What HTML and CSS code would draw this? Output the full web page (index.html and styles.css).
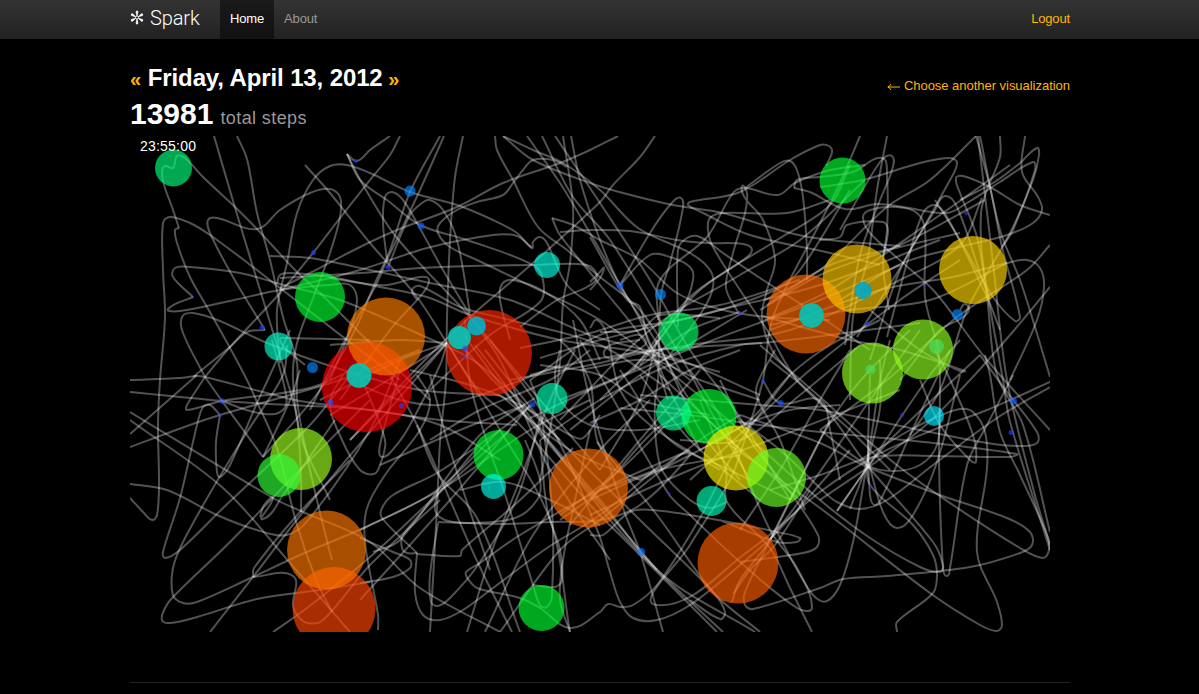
FILE: index.html
```html
<!DOCTYPE html>
<html lang="en">
<head>
<meta charset="utf-8">
<title>Spark</title>
<link rel="stylesheet" href="styles.css">
</head>
<body>
<header class="navbar">
  <div class="navbar-inner">
    <a class="brand"><svg class="brand-mark" viewBox="0 0 14 14"><path d="M7 5.4L6 1.2Q7 -.6 8 1.2ZM7 8.6L6 12.8Q7 14.6 8 12.8Z"/><path transform="rotate(60 7 7)" d="M7 5.4L6 1.2Q7 -.6 8 1.2ZM7 8.6L6 12.8Q7 14.6 8 12.8Z"/><path transform="rotate(120 7 7)" d="M7 5.4L6 1.2Q7 -.6 8 1.2ZM7 8.6L6 12.8Q7 14.6 8 12.8Z"/><circle class="hub" cx="7" cy="7" r="1.5"/></svg><span class="brand-name">Spark</span></a>
    <nav class="nav"><a class="nav-item active">Home</a><a class="nav-item">About</a></nav>
    <a class="logout">Logout</a>
  </div>
</header>
<main class="container">
  <div class="heading">
    <div>
      <h2 class="date"><a>«</a> <span class="date-text">Friday, April 13, 2012</span> <a>»</a></h2>
      <p class="total"><strong>13981</strong><small>total steps</small></p>
    </div>
    <a class="choose"><svg class="arrow" viewBox="0 0 13 8"><path d="M13 4H1M4 1Q3 3.2 .8 4Q3 4.8 4 7"/></svg><span>Choose another visualization</span></a>
  </div>
  <svg class="viz" viewBox="130 136 920 496">
    <g id="trails"></g>
    <g id="dots"></g>
    <text class="clock" x="140" y="151" textLength="56">23:55:00</text>
  </svg>
  <hr class="rule">
</main>
<script src="viz.js"></script>
</body>
</html>
```
FILE: styles.css
```css
body { margin: 0; background: #000; color: #fff; font: 13px/18px "Liberation Sans", Arial, sans-serif; overflow: hidden; }
.navbar { height: 39px; background: linear-gradient(#333, #222); }
.navbar-inner { width: 940px; height: 39px; margin-left: 130px; display: flex; }
.brand { width: 90px; display: flex; align-items: flex-start; }
.brand-mark { width: 14px; height: 15px; margin-top: 10px; fill: #fff; stroke: #fff; stroke-width: .7; overflow: visible; }
.brand-mark .hub { fill: none; stroke-width: .8; }
.brand-name { margin: 7px 0 0 6px; font: 300 20px/22px Roboto, "Open Sans", sans-serif; letter-spacing: -.1px; }
.nav { display: flex; flex: 1; }
.nav-item { padding: 10px 10px 11px; color: #999; line-height: 18px; letter-spacing: -.15px; }
.nav-item.active { color: #fff; background: linear-gradient(#1a1a1a, #111); }
.logout { color: #ffb400; padding-top: 10px; letter-spacing: -.15px; }
.container { width: 940px; margin-left: 130px; }
.heading { height: 97px; display: flex; justify-content: space-between; }
.date { margin: 21px 0 0; font-size: 24px; line-height: 36px; white-space: nowrap; }
.date a { color: #ffb400; font-size: 20px; }
.date-text { letter-spacing: -.12px; margin-right: -1px; }
.total { margin: -1px 0 0; line-height: 36px; display: flex; align-items: baseline; gap: 7px; }
.total strong { font-size: 30px; }
.total small { font-size: 18px; color: #999; letter-spacing: .4px; }
.choose { color: #ffb400; padding-top: 38px; display: flex; gap: 4px; letter-spacing: -.03px; }
.arrow { width: 13px; height: 8px; margin-top: 6px; fill: none; stroke: #ffb400; stroke-width: 1; }
.viz { display: block; width: 920px; height: 496px; margin-top: 1px; overflow: hidden; }
.heading + .viz { margin-top: 0; }
#trails { fill: none; stroke: #fff; stroke-width: 2; stroke-opacity: .32; }
#dots { fill-opacity: .66; }
.clock { fill: #fff; font-size: 14px; }
.rule { margin: 50px 0 0; border: 0; border-top: 1px solid #222; }
```
FILE: viz.js
```js
// Each line is a smooth trail through x,y points.
const trails = `
214,136 236,211 253,267 276,342 287,380 297,418 301,480 301,512
237,136 247,159 257,213 270,260 283,317 297,363 297,400 310,470 328,545 332,560
179,228 172,207 164,185 162,172 165,166 173,168 177,156 185,158 203,177 235,207 257,229 297,272 320,293 370,343 430,400
179,228 175,230 177,243 190,277 207,307 230,348 247,380 257,402 277,448 297,525 317,582 332,612
400,380 347,340 280,288 253,267 210,235 190,223 170,217 163,223 163,270 165,317 160,380 158,425 159,485 157,515 152,520 143,512 130,498
265,330 233,277 210,233 208,220 217,218 257,229 280,210 310,193 330,189 340,197 340,217 330,253 315,293 297,343 293,380 302,440 330,500
193,297 173,277 175,268 190,267 240,273 280,284 340,300 410,330 480,365 560,440
193,297 168,309 180,311 230,301 280,290 330,285 350,285 357,300 350,330 330,380
205,377 183,333 182,317 193,313 220,321 267,343 343,370 420,390 500,395
193,377 230,347 247,332 265,330
205,377 230,347 280,293 313,253 340,218 370,180 390,155 400,136
305,165 330,193 370,243 417,297 447,343 480,392 517,422 547,455 593,508 630,545 717,632
280,363 277,310 287,263 297,213 313,180 330,166 347,165 370,173 410,192 457,205 493,220 517,233 532,248 533,242 540,237 547,243 567,285 600,310
347,154 357,161 370,150 390,136
347,154 363,185 397,238 470,317 540,400 600,470
270,256 310,258 370,270 430,283 510,300 590,335 680,360 760,395
277,284 280,275 290,273 330,277 370,285 427,297 470,315 560,340 640,352 720,372
440,136 410,192 390,250 375,283 355,330 320,390 263,457
444,136 420,190 387,260 375,287 345,340 310,410
463,136 455,177 450,240 447,317 446,380 440,442 437,508 430,632
495,136 497,150 513,180 538,227 567,250 600,277 640,310 680,370
503,136 533,150 563,163 600,190 638,228 690,253 710,270 713,287 703,310 670,355
618,136 590,150 560,163 503,183 457,207 397,230 360,247 310,273 280,288
567,167 553,160 533,160 523,170 513,183 503,195 477,202 457,210 440,223 438,233 450,247 477,260 533,287 600,320 680,380 740,430
280,290 360,270 427,248 493,235 517,236 532,248
280,278 360,273 420,268 470,266 533,265 587,265 597,277 587,287 557,300 520,327
387,260 383,223 385,197 392,192 403,200 417,223 443,270 470,315
388,267 410,215 422,203 430,200 443,210 457,240 470,313
347,154 360,180 387,200 420,225 467,240 533,265 543,280 540,302 490,335 430,390
330,278 360,283 387,285 420,277 429,280 423,293 390,330 340,400
417,300 412,290 420,286 460,307 510,320 600,345 670,390
527,136 560,183 590,233 620,285 640,320 665,380 700,450
542,136 573,197 610,240 680,355 710,410 750,480
555,136 600,203 650,280 690,350 735,410 790,500
563,136 573,207 570,263 563,303 560,363 550,430 540,480
571,136 580,180 600,240 620,285 655,340 690,400 740,450
655,136 640,157 613,185 600,202 533,263 470,317 420,365 350,440
552,218 573,225 600,240 640,260 677,293 723,310 767,317 830,320
552,218 560,235 600,285 650,350 668,400
510,340 500,300 502,284 513,280 545,292 580,320 600,360
503,136 533,160 590,183 623,193 673,205 723,213 790,233 830,240 900,246
620,285 650,233 670,205 681,198 682,213 670,263 661,295 658,380 655,402 656,442 663,472 690,500 710,508 727,502
560,232 590,230 630,231 677,240 707,243 743,244 752,250 743,260 690,297 633,370
678,327 678,250 687,238 700,237 723,253 763,280 810,310 870,350
620,285 650,255 670,257 690,267 693,280 683,307 640,365
830,200 787,213 723,213 710,218 708,230 713,247 740,290 767,330 797,380 850,430 890,470
826,166 832,152 829,146 820,145 790,160 740,192 690,202 688,205 703,213 750,235 830,253 880,265
865,165 830,170 795,183 778,195 745,188 733,193 707,237 660,280 658,320
738,312 726,288 733,253 745,213 747,193 742,186 745,198 763,220 775,260 767,290 762,317 772,350 797,380
807,280 807,250 803,197 797,170 790,161 780,163 745,188
850,165 830,205 777,240 700,290 650,350 600,400
850,190 800,270 775,290 720,310 680,320 600,335 530,380
865,180 800,240 740,275 650,330 560,420
794,188 797,180 820,177 853,172 882,158 887,177 887,230 883,257
794,188 810,192 845,209 877,204 903,207 947,213 967,203 1000,182 1033,162 1035,170 1013,230 1002,247
820,187 863,180 920,163 950,158 957,163 950,180 903,263 857,337
860,136 840,183 820,223 773,317 763,380 748,430
887,136 877,190 868,257 853,317 850,400
976,136 930,180 887,207 820,270 765,300
978,136 993,263 1007,380 1033,488 1050,545
976,136 990,187 1002,247 1020,317 1015,321 993,297 960,240 935,200
1000,136 1000,157 987,190 981,213 983,263 1003,380 1010,422 1050,550
1025,136 1022,172 1038,197 1042,210 1033,223 1007,235 960,247 903,263 840,300
960,200 993,183 1020,163 1037,148 1039,155 1033,180 1010,233 967,310 940,390 910,435
1050,215 1020,205 990,187 963,176 956,178 960,193 977,237 987,297 997,375 1023,425 1050,532
1050,245 1027,270 957,317 887,380 820,430
1050,287 1010,335 970,380 920,430 820,500
1050,377 1035,327 1020,280 1000,230 980,136
1010,380 1037,320 1044,287 1040,268 1027,260 1007,263 953,277 880,290 770,330
820,240 840,237 847,225 883,222 888,230 883,263 889,310
840,230 880,162 892,156 892,170 880,200 860,255 845,345
935,337 925,297 925,230 917,213 897,207 870,210 863,217 870,233 903,263 935,292 987,360 1050,430
887,337 907,263 923,213 935,205 947,217 987,297 1000,330
870,360 900,270 935,210 945,196 957,207 980,273 990,300
960,310 965,304 969,310 962,318 940,330 900,380
760,310 820,275 900,245 985,200
765,320 830,290 940,215 1010,165
530,375 590,360 690,345 790,330 900,280 960,245 982,198
540,358 600,340 720,310 820,285 940,240
530,418 590,390 700,345 820,300 900,265
767,305 830,265 900,247 960,233
763,316 850,340 900,350 965,371 960,371 920,350 870,310
770,325 850,310 930,300 1007,263
520,348 590,333 650,315 720,305 800,280
510,380 590,365 660,350 760,343 830,335 920,323
762,343 740,345 670,365 600,400 540,440
590,328 597,320 607,335 620,390 650,425 720,470
600,332 640,330 660,315 720,318
640,340 610,345 604,355 615,358 645,345 640,335 620,340
560,400 633,370 690,330 740,312
570,430 633,380 680,350 747,310
560,340 570,350 580,362 591,385 597,440 615,470
590,290 600,278 604,268 600,272 590,282
590,237 627,300 640,307 650,345 690,380
1050,382 987,410 933,430 877,455 820,492 750,550 657,605 690,545 730,480 748,430
1050,387 997,418 933,465 887,500 860,509 837,502 820,488 780,450 740,420
640,395 700,400 760,405 820,410 920,430 987,443 1020,446 1037,443 1037,432 1007,392 980,355
620,408 690,415 760,425 820,432 933,443 1017,454 1010,457 933,456 873,457 820,475 770,490
985,355 990,375 1000,432 1020,475 1047,535 1049,550 1043,558 1020,548 953,505 893,462 820,397 760,345
740,415 820,443 863,465 940,495 1007,518 1030,532 1032,545 1020,553 970,567 887,576 843,579 820,588 753,609 745,605 745,592 770,540 800,480
897,632 897,622 933,593 937,575 933,555 913,525 870,485 868,458 870,375
740,430 820,500 870,538 920,567 940,572 943,565 933,542 867,465 820,402 770,360
730,445 820,508 930,593 980,625 997,631 1002,625 997,602 977,552 987,468 985,432 973,412 960,409 937,417 910,430 860,460
937,340 940,375 939,458 943,568 947,576 950,568 967,465 987,425 1013,375
935,350 948,375 973,435 976,462 970,460 940,425 920,380
777,532 800,575 815,597 827,601 840,585 853,542 867,465 880,408 880,360
868,440 870,495 875,505 883,495 910,435 930,392 950,350
868,460 883,512 897,528 913,515 937,462 960,375
820,430 867,465 893,471 920,465 937,445 940,408
837,511 867,468 930,375 960,340
837,511 867,468 890,440 980,355
850,509 866,465 880,380 890,340
790,500 820,440 845,400 870,370 910,330
700,450 750,420 790,375 830,345 880,320
690,480 750,425 810,370 900,300 960,260
680,440 740,440 800,395 860,345
640,480 700,450 745,425 790,410 840,405
740,530 780,470 820,400 850,350
770,540 800,500 870,400 920,330
805,510 780,440 758,400 757,385 775,350
763,381 780,403 820,400 830,430 840,480
130,380 180,378 197,376 205,377 263,392 300,401 370,410 440,420 517,425
130,392 222,401 290,405 370,410 440,425 500,460
205,377 187,405 187,410 222,401 313,387 370,360
205,377 222,401 263,457
130,447 190,425 220,415 290,395 340,380 420,350
220,415 216,442 217,472 220,477 230,465 257,403 270,375 290,330
220,415 210,405 203,407 197,425 180,498 163,552 165,558 180,550 223,508 310,425 350,375
130,412 273,498 303,512 370,542 420,588 500,632
130,420 223,488 290,563 350,632
130,434 197,375
130,484 167,490 217,515 257,530 287,535 310,518 370,430 400,360
253,577 300,555 370,525 437,490 500,430
253,577 197,602 183,603 173,595 173,568 183,542 213,488 247,432 283,375 287,345
370,582 320,590 257,599 197,617 170,623 162,620 165,608 173,597 230,542 290,480 370,400
210,632 253,577 303,512 370,432 447,343
253,577 293,576 293,605 297,615 307,623 323,620 370,565 440,500
273,632 307,608 370,557 440,492 510,430
253,577 254,568 300,512 350,460
260,517 264,505 273,498 263,519 283,495 335,420
222,401 250,411 275,414 286,405 284,385 272,340
263,457 290,400 300,370
305,365 285,348 280,339 285,338 370,340
343,375 330,402 342,440 360,470 374,474 380,465 385,440 360,375
447,343 400,360 320,400
447,343 380,385 330,415
447,343 410,380 350,440
447,343 440,365 410,425 395,447 382,457 380,445 400,370
447,343 400,340 330,345
417,425 437,473 477,518 520,632
390,375 417,425 450,500 478,563 512,632
430,375 450,450 490,570
417,375 430,400 420,430 385,475 367,508 365,542 378,615 378,630
360,538 393,552 410,560 410,568 393,577 360,583
417,553 415,592 423,615 440,620 463,610 493,588 547,548 600,515 660,465
477,448 440,492 403,535 402,548 407,553 417,553
417,553 382,518 382,508 393,495 437,473 500,430 532,405
417,554 460,556 462,550 520,500 573,448
540,418 517,498 478,565 450,598 438,606 431,602 430,575 438,523
438,522 503,524 550,522 600,520 640,505 690,455 682,454 660,468 600,490
467,632 493,548 520,480 550,400 575,350
485,632 533,535 600,450 650,400
500,632 560,550 600,520 700,440 740,415
467,578 466,572 480,563 520,535 600,490 690,450
467,578 477,588 520,598 540,608 570,628 600,612 608,604 620,607 633,605 657,585 700,518 740,442 790,375
465,320 470,382 487,442 503,488 533,585 540,605 547,607 552,595 552,508 540,408 530,380
533,585 555,587 562,580 560,550 547,508 540,440
570,632 560,600 563,560 575,500 590,430
470,317 500,360 550,470 610,560
447,343 500,430 550,520 570,632
465,350 530,420 600,500 663,575 755,632
475,345 540,430 610,520 657,570 723,632
485,350 550,430 640,520 713,592 725,612 720,619 690,600
460,330 520,410 580,480 657,570
490,340 550,425 598,532 610,572 620,602 633,618 657,620 690,605 740,565 777,532 850,450
573,320 590,400 623,508 640,552 663,632
597,442 657,515 713,592 760,632
590,535 603,535 630,512 653,510 707,518 777,532 800,538 797,542 777,542 720,520
580,340 668,493 690,515 740,562 797,608 812,608 797,568 770,530 722,420 690,370
812,632 790,588 770,548 727,502 726,470 700,400
740,562 803,553 817,547 818,535 790,492 750,440 720,380
590,515 690,470 770,440 900,390
590,500 660,470 740,455
560,520 600,490 655,430 690,410
560,515 620,470 690,400
570,525 640,440 700,370
525,405 460,430 380,465
535,398 480,435 400,540 373,552
530,405 450,500 360,600
500,395 570,450 640,480
460,490 503,482 550,500 600,525
438,492 435,510 445,520 470,523 515,518 537,500 540,480 525,440
360,385 400,400 440,405 480,395 560,365
360,530 440,490 530,430 590,400
430,440 480,410 550,380 590,350
410,370 470,385 520,405 570,435 583,438 600,415
560,350 555,375 560,400 590,425 640,430 700,420
590,423 640,400 690,370 740,350
540,365 600,375 640,400 710,415
580,370 650,360 700,380 760,400
620,370 670,440 730,470 790,500
640,375 690,440 760,500
660,375 730,440 800,500
657,340 700,430 740,480
657,340 640,400 600,470
732,602 740,580 770,540 800,480 830,420
733,594 750,570 775,545 810,490
`;
document.getElementById('trails').innerHTML = trails.trim().split('\n').map(line => {
  const p = line.split(' ').map(s => s.split(',').map(Number));
  let d = 'M' + p[0];
  for (let i = 0; i < p.length - 1; i++) {
    const a = p[i - 1] || p[i], b = p[i], c = p[i + 1], e = p[i + 2] || c;
    const len = (u, v) => Math.hypot(u[0] - v[0], u[1] - v[1]) || 1;
    // Tangents are scaled to the segment length so tight hooks do not overshoot.
    const seg = len(b, c) / 3, t1 = seg / len(a, c), t2 = seg / len(b, e);
    d += `C${b[0] + (c[0] - a[0]) * t1},${b[1] + (c[1] - a[1]) * t1} ${c[0] - (e[0] - b[0]) * t2},${c[1] - (e[1] - b[1]) * t2} ${c}`;
  }
  return `<path d="${d}"/>`;
}).join('');

// Dot rows: x y radius colour.
const dots = `
367 387 45 #ff0000|489 353 43 #ff2600|334 608.5 41.5 #ff4400|738 563 40.5 #ff5c00|588.5 488 39.5 #ff6c00
806 314 39.5 #ff6800|326.5 550 39.5 #ff7600|386 336.5 39 #ff7c00|857 279 34.5 #ffc800|973 270 34 #ffd500
709 416.5 27.5 #00ff30|736 458 32.5 #fff000|301 459 31 #a0ff20|872.5 373 30.5 #90ff20|923 349.5 30 #90ff20
776.5 477.5 29.5 #6aff22|320 297 25 #00ff30|498.5 455 25 #00ff30|842.5 180.5 23 #00ff30|541.5 608 23 #00ff30
279 475.5 21.5 #30ff38|679 332 19.5 #00ff64|173.5 168 18.5 #00ff7b|673.5 413 17.5 #00ff90|552 398.5 15.5 #00ffb4
711.5 501 15 #00ffb8|278.5 346.5 14 #00ffcc|547 265 13 #00ffdf|811.5 315.5 12.5 #00f5e8|359 375.5 12.5 #00ffe8
493.5 486.5 12.5 #00ffe8|459.5 337.5 11.5 #00fff0|934 416 10 #00e8ff|476.5 326 9.5 #00e0ff|863 290.5 8.5 #00d0ff
936.5 346.5 7.5 #48e060|410 191 5.5 #0088ff|312.5 367.5 5.5 #0088ff|660.5 294.5 5.5 #0088ff|957.5 314.5 5.5 #0088ff
870.5 369.5 5 #48e060|641 552 4 #1070ff|421 226 3.5 #1060ff|620 285.5 3.5 #1060ff|1013.5 401 3.5 #1060ff
780.5 403 3 #1058ff|465.5 348.5 3 #2050ff|532.5 404.5 3 #2050ff|330.5 402.5 3 #2050ff|388 267 2.5 #2040ff
313.5 252.5 2.5 #2040ff|262 327.5 2.5 #2040ff|401.5 406 2.5 #2040ff|222 401 2.8 #2050ff|1011 432.5 2.5 #2040ff
356 161 2 #2830ff|740.5 313.5 2 #2830ff|867 323.5 2 #2830ff|902 415 2 #2830ff|763 381 2 #2830ff|464 356.5 2 #2830ff
220.5 415.5 1.8 #2830ff|966 213.5 1.8 #2830ff|669 493.5 1.5 #2830ff|870.5 486 1.5 #2830ff|193 297 1 #4040ff
924.5 286.5 1 #4040ff|593 423.5 1 #4040ff|531.5 248 1 #804060
`;
const dense = ['811.5', '359', '459.5', '476.5', '863'];
document.getElementById('dots').innerHTML = dots.trim().split(/[|\n]/).map(s => {
  const [x, y, r, c] = s.split(' ');
  const shade = dense.includes(x) ? `<circle cx="${x}" cy="${y}" r="${r}" fill="#003830"/>` : '';
  return shade + `<circle cx="${x}" cy="${y}" r="${r}" fill="${c}"/>`;
}).join('');
```
